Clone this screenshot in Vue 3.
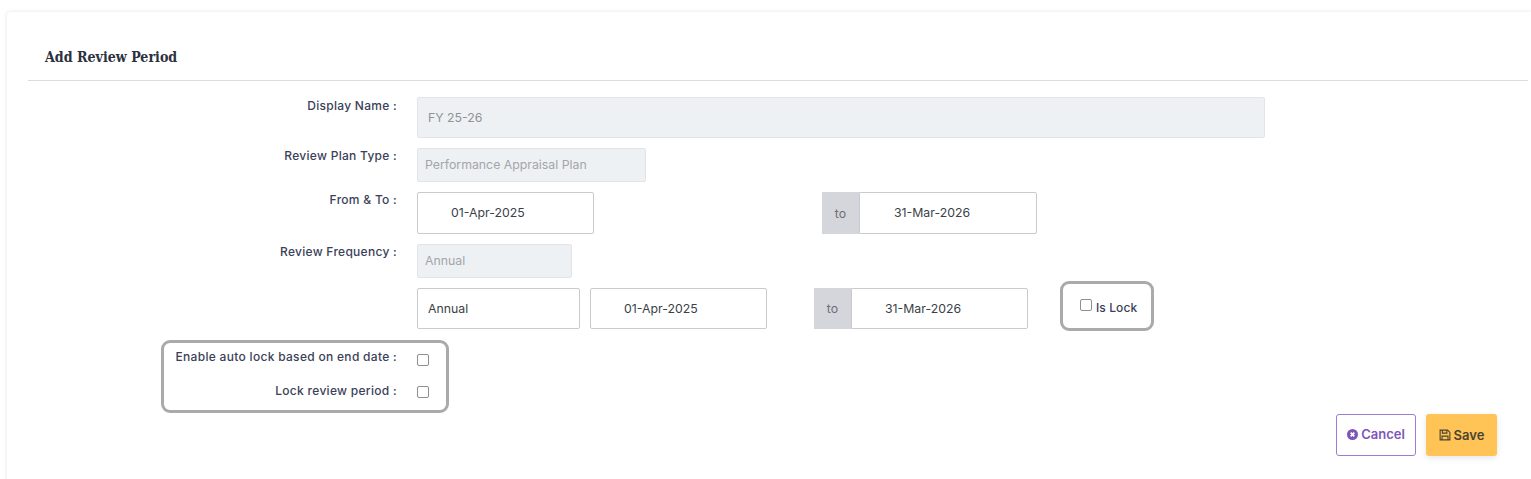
<script setup>
</script>

<template>
  <div class="page">
    <div class="card">
      <div class="header"><h2 class="title">Add Review Period</h2></div>
      <div class="form">
        <div class="row first">
          <label class="label">Display Name :</label>
          <div class="field disabled name">FY 25-26</div>
        </div>
        <div class="row">
          <label class="label">Review Plan Type :</label>
          <div class="field disabled plan">Performance Appraisal Plan</div>
        </div>
        <div class="row">
          <label class="label">From &amp; To :</label>
          <div class="field date from">01-Apr-2025</div>
          <div class="addon to-first">to</div>
          <div class="field date to-date">31-Mar-2026</div>
        </div>
        <div class="row">
          <label class="label">Review Frequency :</label>
          <div class="field disabled freq">Annual</div>
        </div>
        <div class="row period">
          <div class="label"></div>
          <div class="field period-name">Annual</div>
          <div class="field date period-from">01-Apr-2025</div>
          <div class="addon to-second">to</div>
          <div class="field date period-to">31-Mar-2026</div>
          <div class="lock-box">
            <span class="check lock-check"></span>
            <span class="lock-text">Is Lock</span>
          </div>
        </div>
        <div class="auto-box">
          <div class="auto-row">
            <label class="auto-label">Enable auto lock based on end date :</label>
            <span class="check"></span>
          </div>
          <div class="auto-row">
            <label class="auto-label">Lock review period :</label>
            <span class="check"></span>
          </div>
        </div>
        <div class="actions">
          <button class="btn cancel">
            <svg class="ico" viewBox="0 0 16 16" width="11" height="11">
              <circle cx="8" cy="8" r="8" fill="#7d56b8" />
              <path d="M5.4 5.4l5.2 5.2M10.6 5.4l-5.2 5.2" stroke="#fff" stroke-width="2.6" fill="none" />
            </svg>
            Cancel
          </button>
          <button class="btn save">
            <svg class="ico" viewBox="0 0 16 16" width="12" height="12" fill="none" stroke="#4a4433" stroke-width="1.5">
              <path d="M1.5 1.5h10l3 3v10h-13z" />
              <path d="M4.5 1.5v4h6v-4M4 14.5v-5h8v5" />
            </svg>
            Save
          </button>
        </div>
      </div>
    </div>
  </div>
</template>

<style scoped>
.page {
  padding: 12px 0 0 7px;
  font-family: Inter, "Noto Sans", sans-serif;
  font-size: 12.3px;
  color: #3b3f58;
  height: 467px;
  overflow: hidden;
}
.card {
  background: #fff;
  border-radius: 4px 0 0 0;
  box-shadow: 0 0 4px rgba(0, 0, 0, 0.12);
  height: 500px;
}
.header {
  margin-left: 21px;
  height: 69px;
  border-bottom: 1px solid #dcdcdc;
  padding: 36px 0 0 17px;
  box-sizing: border-box;
  margin-right: 3px;
}
.title {
  margin: 0;
  font-family: "DejaVu Serif Condensed", "DejaVu Serif", serif;
  font-size: 14.1px;
  line-height: 18px;
  font-weight: 700;
  color: #2c3040;
}
.form {
  padding-top: 16px;
}
.row {
  display: flex;
  align-items: flex-start;
  margin-bottom: 10px;
}
.first { margin-bottom: 10px; }
.first .label { padding-top: 1px; }
.label {
  width: 390px;
  margin-right: 20px;
  text-align: right;
  line-height: 16px;
  font-size: 12px;
  font-weight: 500;
  letter-spacing: 0.28px;
  flex: none;
}
.field {
  box-sizing: border-box;
  border: 1px solid #c9cacd;
  border-radius: 2px;
  background: #fff;
  display: flex;
  align-items: center;
  padding-left: 10px;
  flex: none;
}
.disabled {
  background: #eef1f4;
  border-color: #e2e4e7;
  color: #a2a5aa;
  height: 34px;
  padding: 0 0 2px 7px;
}
.name { width: 848px; height: 41px; padding: 0 0 0 10px; color: #8f9297; }
.plan { width: 229px; }
.freq { width: 155px; }
.date { padding-left: 33px; color: #3b3f48; }
.from { width: 177px; height: 42px; padding-bottom: 1px; }
.addon {
  box-sizing: border-box;
  background: #d5d6dc;
  color: #6b6d75;
  width: 37px;
  display: flex;
  align-items: center;
  justify-content: center;
  flex: none;
}
.to-first { height: 42px; margin-left: 228px; }
.to-date { width: 178px; height: 42px; border-radius: 0 2px 2px 0; padding: 0 0 1px 34px; }
.period { align-items: center; height: 41px; margin-bottom: 11px; }
.period-name { width: 163px; height: 41px; color: #3b3f48; }
.period-from { width: 177px; height: 41px; margin-left: 10px; }
.to-second { height: 41px; margin-left: 47px; }
.period-to { width: 177px; height: 41px; border-radius: 0 2px 2px 0; }
.lock-box {
  box-sizing: border-box;
  width: 94px;
  height: 50px;
  margin: -5px 0 0 32px;
  border: 3px solid #aaa;
  border-radius: 9px;
  display: flex;
  align-items: center;
  padding-left: 17px;
  gap: 4px;
}
.lock-check { margin-top: -3px; }
.lock-text { font-size: 12px; font-weight: 500; padding-top: 2px; letter-spacing: 0.1px; }
.check {
  box-sizing: border-box;
  display: block;
  width: 12px;
  height: 12px;
  border: 1px solid #8f8f8f;
  border-radius: 2px;
  background: #fff;
  flex: none;
}
.auto-box {
  box-sizing: border-box;
  width: 288px;
  height: 73px;
  margin-left: 154px;
  border: 3px solid #aaa;
  border-radius: 9px;
  padding-top: 1px;
}
.auto-row {
  display: flex;
  align-items: center;
  height: 32px;
}
.auto-label {
  width: 233px;
  margin-right: 20px;
  text-align: right;
  font-size: 12px;
  font-weight: 500;
  letter-spacing: 0.3px;
  flex: none;
  padding-bottom: 4px;
}
.auto-row:first-child .auto-label { padding-bottom: 8px; }
.actions {
  display: flex;
  justify-content: flex-end;
  gap: 10px;
  padding-right: 34px;
  margin-top: 1px;
}
.btn {
  box-sizing: border-box;
  height: 42px;
  font-family: Inter, "Noto Sans", sans-serif;
  font-size: 13px;
  font-weight: 600;
  border-radius: 3px;
  display: flex;
  align-items: center;
  justify-content: center;
  gap: 3px;
}
.cancel { width: 80px; background: #fff; border: 1.5px solid #9d7dd0; color: #7d56b8; padding: 0 0 2px; }
.save { width: 71px; background: #ffc455; border: 0; color: #4a4433; box-shadow: 0 2px 6px rgba(0, 0, 0, 0.1); }
.ico { flex: none; }
</style>
